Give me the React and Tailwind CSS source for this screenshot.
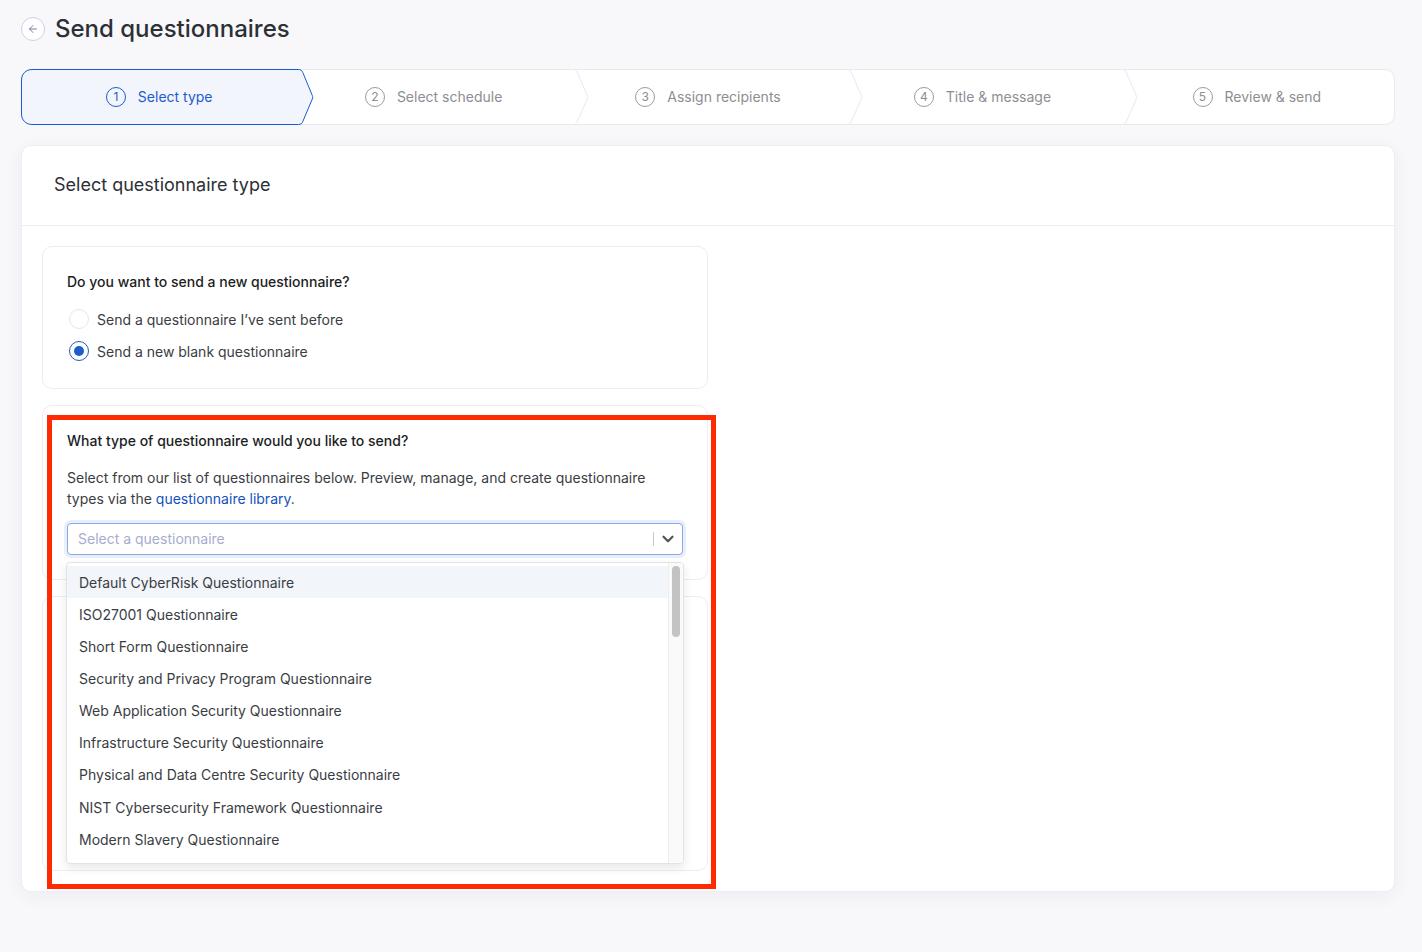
import React from 'react';
import { ArrowLeft, ChevronDown } from 'lucide-react';

const steps = ['Select type', 'Select schedule', 'Assign recipients', 'Title & message', 'Review & send'];

const options = [
  'Default CyberRisk Questionnaire',
  'ISO27001 Questionnaire',
  'Short Form Questionnaire',
  'Security and Privacy Program Questionnaire',
  'Web Application Security Questionnaire',
  'Infrastructure Security Questionnaire',
  'Physical and Data Centre Security Questionnaire',
  'NIST Cybersecurity Framework Questionnaire',
  'Modern Slavery Questionnaire',
];

function Step({ label, index }) {
  const active = index === 0;
  const last = index === steps.length - 1;
  return (
    <div className="relative flex flex-1 items-center justify-center gap-3">
      {active && (
        <svg className="absolute left-[-1px] top-[-1px]" width="293" height="56" viewBox="0 0 293 56" fill="none">
          <path
            d="M11 .5H277.5c2.2 0 3.6 1 4.3 3L291.3 26.500c.6 1.500.6 2 0 3.500L281.800 52.500c-.7 2-2.100 3-4.300 3H11C5 55.500.5 51 .5 45V11C.5 5 5 .5 11 .5Z"
            fill="#f2f5fb"
            stroke="#1c5ccf"
          />
        </svg>
      )}
      {!active && !last && (
        <svg className="absolute right-[-18px] top-[-1px]" width="18" height="56" viewBox="0 0 18 56" fill="none">
          <path d="M2 .5c2.500 0 3.500 1 4.300 3L16.300 26.500c.6 1.500.6 2 0 3.500L6.300 52.500c-.8 2-1.800 3-4.300 3" fill="#fff" stroke="#e9e9ef" />
        </svg>
      )}
      <span
        className={`relative flex h-5 w-5 items-center justify-center rounded-full border text-[12px] leading-none ${
          active ? 'border-[#1c5ccf] text-[#1c5ccf]' : 'border-[#9b9b9f] text-[#8e8e92]'
        }`}
      >
        {index + 1}
      </span>
      <span className={`relative mb-[1px] text-[14px] ${active ? 'text-[#1c5ccf]' : 'text-[#8e8e92]'}`}>{label}</span>
    </div>
  );
}

function Radio({ checked, label }) {
  return (
    <label className="flex h-8 items-center gap-2 pl-[2px]">
      <span
        className={`flex h-5 w-5 items-center justify-center rounded-full border bg-white ${
          checked ? 'border-[#1c5ccf]' : 'border-[#e6e6ea]'
        }`}
      >
        {checked && <span className="h-[10px] w-[10px] rounded-full bg-[#1c5ccf]" />}
      </span>
      <span className="text-[14px] text-[#3a3d43]">{label}</span>
    </label>
  );
}

function QuestionnaireMenu() {
  return (
    <div className="absolute left-[23px] top-[156px] flex h-[302px] w-[618px] overflow-hidden rounded-[4px] border border-[#e3e3e6] bg-white shadow-[0_4px_10px_rgba(30,30,60,0.1)]">
      <ul className="flex-1 pt-[3.3px]">
        {options.map((opt, i) => (
          <li
            key={opt}
            className={`flex h-[32.1px] items-center pl-3 text-[14px] text-[#3a3d43] ${i === 0 ? 'bg-[#f2f5fa]' : ''}`}
          >
            {opt}
          </li>
        ))}
      </ul>
      <div className="w-[15px] border-l border-[#ededef] bg-[#fafafa] pl-[3px] pt-[3px]">
        <div className="h-[71px] w-2 rounded-full bg-[#c3c3c3]" />
      </div>
    </div>
  );
}

export default function App() {
  return (
    <div className="relative min-h-[952px] bg-[#f8f8fb] pl-[21px] pr-[27px] pt-[17px] font-['Inter',sans-serif] antialiased">
      <div className="flex h-6 items-center gap-[10px]">
        <button className="flex h-6 w-6 items-center justify-center rounded-full border border-[#cfcfe6] bg-white text-[#7b7bb0]">
          <ArrowLeft size={12} strokeWidth={2} />
        </button>
        <h1 className="text-[24px] font-medium text-[#2d3036]">Send questionnaires</h1>
      </div>

      <div className="mt-7 flex h-[56px] rounded-[10px] border border-[#e9e9ef] bg-white">
        {steps.map((s, i) => (
          <Step key={s} label={s} index={i} />
        ))}
      </div>

      <div className="mt-5 rounded-[10px] border border-[#eeeef2] bg-white shadow-[0_4px_20px_rgba(40,40,80,0.05)]">
        <div className="flex h-[80px] items-center border-b border-[#ececf0] pb-[2px] pl-8 text-[18px] text-[#2d3036]">
          Select questionnaire type
        </div>
        <div className="flex w-[706px] flex-col gap-4 p-5">
          <section className="h-[143px] rounded-[10px] border border-[#ececf3] px-6 pt-6">
            <h2 className="text-[14px] font-medium leading-[21px] text-[#1c1e22]">Do you want to send a new questionnaire?</h2>
            <div className="mt-[11px]">
              <Radio label="Send a questionnaire I’ve sent before" />
              <Radio checked label="Send a new blank questionnaire" />
            </div>
          </section>

          <section className="relative z-10 h-[175px] rounded-[10px] border border-[#ececf3] px-6 pt-6">
            <h2 className="text-[14px] font-medium leading-[21px] text-[#1c1e22]">What type of questionnaire would you like to send?</h2>
            <p className="mt-4 text-[14px] leading-[21px] text-[#3a3d43]">
              Select from our list of questionnaires below. Preview, manage, and create questionnaire types via the{' '}
              <a className="text-[#1450c0]">questionnaire library</a>.
            </p>
            <div className="mt-[14px] flex h-8 items-center rounded-[4px] border border-[#8ba8e8] bg-white pl-[10px] shadow-[0_0_0_3px_#e8eefa]">
              <span className="mb-[1px] flex-1 text-[14px] text-[#a9abd0]">Select a questionnaire</span>
              <span className="h-[14px] w-px bg-[#c8c8cc]" />
              <span className="flex w-[28px] items-center justify-center text-[#55565a]">
                <ChevronDown size={18} strokeWidth={3} />
              </span>
            </div>
            <QuestionnaireMenu />
          </section>

          <section className="h-[275px] rounded-[10px] border border-[#ececf3]" />
        </div>
      </div>

      <div className="pointer-events-none absolute left-[47px] top-[415px] z-20 h-[474px] w-[669px] border-[5px] border-[#ff2a00]" />
    </div>
  );
}
